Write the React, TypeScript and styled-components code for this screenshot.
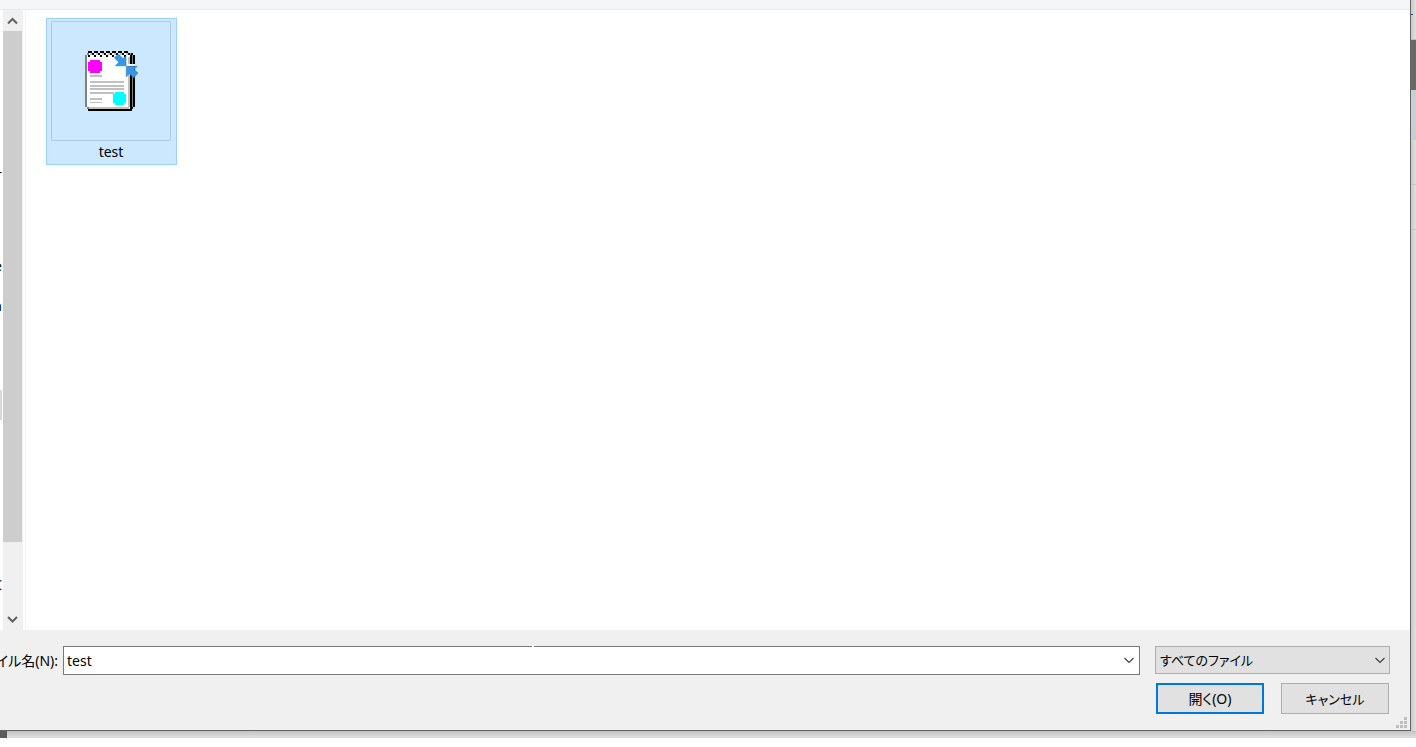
import React from "react";
import styled, { createGlobalStyle } from "styled-components";

const GlobalStyle = createGlobalStyle`
  * { box-sizing: border-box; }
  body {
    margin: 0;
    background: #fff;
    color: #000;
    font: 14px/20px "Noto Sans", "Noto Sans CJK JP", sans-serif;
    font-feature-settings: "palt";
  }
  button, input, select { font: inherit; color: inherit; font-feature-settings: inherit; }
`;

const Screen = styled.div`
  display: flex;
  flex-direction: column;
  min-height: 100vh;
  padding-bottom: 9px;
`;

const Desktop = styled.div`
  flex: 1;
  display: grid;
  grid-template-columns: minmax(0, 1fr) 5px;
  grid-template-rows: 1fr 7px;
  background: #dcdcdc;
`;

const Dialog = styled.main`
  display: flex;
  flex-direction: column;
  border: solid #636363;
  border-width: 0 1px 1px 0;
  background: #fff;
`;

const BehindRight = styled.div`
  display: flex;
  flex-direction: column;
  background: linear-gradient(to right, #cacaca, #e0e0e0);
`;

const Band = styled.div<{ $height: number; $color?: string; $line?: string }>`
  height: ${(p) => p.$height}px;
  background: ${(p) => p.$color ?? "transparent"};
  border-bottom: ${(p) => (p.$line ? `1px solid ${p.$line}` : "0")};
`;

const Tick = styled.div`
  width: 2px;
  height: 1px;
  margin-top: 14px;
  background: #1f4e8c;
`;

const BehindBottom = styled.div`
  grid-column: 1 / -1;
  border-left: 7px solid #5c5c5c;
  background: linear-gradient(to bottom, #c2c2c2, #e0e0e0);
`;

const CommandBar = styled.div`
  height: 10px;
  background: #f5f6f7;
  border-bottom: 1px solid #e8e9eb;
`;

const Content = styled.div`
  flex: 1;
  display: flex;
`;

const NavPane = styled.ul`
  width: 3px;
  margin: 0;
  padding: 147px 1px 0 0;
  list-style: none;
  overflow: hidden;
`;

const NavItem = styled.li<{ $gap?: number; $selected?: boolean }>`
  display: flex;
  justify-content: flex-end;
  height: 30px;
  margin-top: ${(p) => p.$gap ?? 0}px;
  line-height: 30px;
  background: ${(p) => (p.$selected ? "#d9d9d9" : "transparent")};
`;

const ScrollBar = styled.div`
  display: flex;
  flex-direction: column;
  width: 20px;
  padding-right: 1px;
  background: #f0f0f0;
`;

const ScrollButton = styled.button`
  display: flex;
  align-items: center;
  justify-content: center;
  height: 21px;
  padding: 0;
  border: 0;
  background: transparent;
`;

const Track = styled.div`
  flex: 1;
`;

const Thumb = styled.div`
  height: 88.4%;
  background: #cdcdcd;
`;

const FileArea = styled.section`
  flex: 1;
  margin-left: 2px;
  padding: 8px 20px;
  border-left: 1px solid #f3f3f3;
`;

const FileTile = styled.button`
  display: flex;
  flex-direction: column;
  align-items: center;
  width: 131px;
  height: 147px;
  padding: 2px 5px 0 4px;
  border: 1px solid #99d1ff;
  background: #cce8ff;
  line-height: 22px;
`;

const Thumbnail = styled.span`
  display: flex;
  align-items: center;
  justify-content: center;
  width: 120px;
  height: 120px;
  border: 1px solid #afc9de;
  border-radius: 2px;
`;

const Footer = styled.form`
  display: grid;
  grid-template-columns: 63px minmax(0, 1fr) 235px;
  grid-template-rows: 29px 31px;
  row-gap: 8px;
  padding: 16px 20px 16px 0;
  position: relative;
  background: #f0f0f0;
`;

const NameLabel = styled.label`
  display: flex;
  align-items: center;
  justify-content: flex-end;
  padding-right: 5px;
  overflow: hidden;
  white-space: nowrap;
`;

const NameBox = styled.div`
  position: relative;
  display: flex;
  margin-right: 15px;
  border: 1px solid #7a7a7a;
  background: #fff;

  &::before {
    content: "";
    position: absolute;
    top: -1px;
    left: 468px;
    width: 2px;
    height: 1px;
    background: #fff;
  }
`;

const NameInput = styled.input`
  flex: 1;
  min-width: 0;
  padding: 0 3px;
  border: 0;
  outline: 0;
  background: transparent;
`;

const DropButton = styled.button`
  display: flex;
  align-items: center;
  justify-content: center;
  width: 20px;
  padding: 0;
  border: 0;
  background: transparent;
`;

const TypeBox = styled.div`
  position: relative;
  height: 28px;
`;

const TypeSelect = styled.select`
  appearance: none;
  width: 100%;
  height: 100%;
  padding: 0 20px 0 4px;
  border: 1px solid #adadad;
  border-radius: 0;
  background: #e1e1e1;
  font-size: 13px;
`;

const TypeArrow = styled.span`
  position: absolute;
  top: 0;
  right: 5px;
  height: 100%;
  display: flex;
  align-items: center;
  pointer-events: none;
`;

const Actions = styled.div`
  grid-column: 1 / -1;
  display: flex;
  justify-content: flex-end;
  gap: 17px;
  padding-right: 1px;
`;

const ActionButton = styled.button<{ $primary?: boolean }>`
  width: 108px;
  padding: 0;
  border: ${(p) => (p.$primary ? "2px solid #0078d7" : "1px solid #adadad")};
  background: #e1e1e1;
  font-size: ${(p) => (p.$primary ? 14 : 13)}px;
`;

const Grip = styled.svg`
  position: absolute;
  right: 3px;
  bottom: 2px;
`;

const ScrollArrow = ({ down }: { down?: boolean }) => (
  <svg width="11" height="8" viewBox="0 0 11 8" aria-hidden="true">
    <path d={down ? "M1 1l4.500 4.500L10 1" : "M1 6.500L5.500 2 10 6.500"} fill="none" stroke="#606060" strokeWidth="2" />
  </svg>
);

const Chevron = () => (
  <svg width="10" height="7" viewBox="0 0 10 7" aria-hidden="true">
    <path d="M.5 1L5 5.500 9.500 1" fill="none" stroke="#3c3c3c" strokeWidth="1.1" />
  </svg>
);

const coils = [0, 1, 2, 3, 4, 5, 6];

const NotepadIcon = () => (
  <svg width="56" height="60" viewBox="-2 0 56 60" shapeRendering="crispEdges" aria-hidden="true">
    <path d="M2 4h44v54H2z" fill="#fff" />
    <path d="M0 4h2v52H0zM2 2h2v2H2zM2 56h2v2H2z" fill="#808080" />
    <path d="M4 56h40v2H4zM43 6h2v50h-2z" fill="#c0c0c0" />
    <path d="M45 4h2v52h-2zM48 4h2v52h-2zM46 2h2v2h-2zM3 58h44v2H3zM45 56h3v2h-3z" fill="#000" />
    <path d="M47 4h1v52h-1zM44 2h2v2h-2z" fill="#808080" />
    <path d="M4 2h41v2H4z" fill="#fff" />
    {coils.map((i) => (
      <g key={i}>
        <path d={`M${3 + i * 6} 0h4v2h-4zM${7 + i * 6} 2h2v2h-2z`} fill="#000" />
        <path d={`M${5 + i * 6} 2h2v2h-2z`} fill="#c0c0c0" />
        <path d={`M${3 + i * 6} 4h2v2h-2z`} fill="#000" />
      </g>
    ))}
    <path d="M5 9h10v2h2v9h-2v2H5v-2H3v-9h2z" fill="#f0f" />
    <path d="M5 24h12v2H5zM5 30h34v2H5zM5 34h34v2H5zM5 37h34v2H5zM5 41h24v2H5zM5 47h12v2H5zM5 51h12v1H5z" fill="#c0c0c0" />
    <path d="M30 41h9v2h2v9h-2v2h-9v-2h-2v-9h2z" fill="#0ff" />
    <path d="M40 13h10v2H40z" fill="#fff" />
    <g shapeRendering="auto" fill="#3796e6" stroke="#2478c4" strokeWidth=".6">
      <path d="M29.300 6.700L33.500 3.200 38 7.500 41 5v9.800H30.500l3.300-3.500z" />
      <path d="M41.300 15.300h11L49 18.500l4 3.500-4.500 4.800-4.300-4.300-2.900 3.300z" />
    </g>
  </svg>
);

export default function App() {
  return (
    <Screen>
      <GlobalStyle />
      <Desktop>
        <Dialog>
          <CommandBar />
          <Content>
            <NavPane>
              <NavItem>-</NavItem>
              <NavItem $gap={64}>e</NavItem>
              <NavItem $gap={10}>n</NavItem>
              <NavItem $gap={69} $selected />
              <NavItem $gap={150}>C</NavItem>
            </NavPane>
            <ScrollBar>
              <ScrollButton type="button" aria-label="上へスクロール">
                <ScrollArrow />
              </ScrollButton>
              <Track>
                <Thumb />
              </Track>
              <ScrollButton type="button" aria-label="下へスクロール">
                <ScrollArrow down />
              </ScrollButton>
            </ScrollBar>
            <FileArea>
              <FileTile type="button">
                <Thumbnail>
                  <NotepadIcon />
                </Thumbnail>
                <span>test</span>
              </FileTile>
            </FileArea>
          </Content>
          <Footer onSubmit={(e) => e.preventDefault()}>
            <NameLabel htmlFor="file-name">ファイル名(N):</NameLabel>
            <NameBox>
              <NameInput id="file-name" type="text" defaultValue="test" />
              <DropButton type="button" aria-label="履歴を表示">
                <Chevron />
              </DropButton>
            </NameBox>
            <TypeBox>
              <TypeSelect aria-label="ファイルの種類">
                <option>すべてのファイル</option>
              </TypeSelect>
              <TypeArrow>
                <Chevron />
              </TypeArrow>
            </TypeBox>
            <Actions>
              <ActionButton type="submit" $primary>
                開く(O)
              </ActionButton>
              <ActionButton type="button">キャンセル</ActionButton>
            </Actions>
            <Grip width="11" height="11" viewBox="0 0 11 11" aria-hidden="true">
              <path d="M8 0h3v3H8zM4 4h3v3H4zM8 4h3v3H8zM0 8h3v3H0zM4 8h3v3H4zM8 8h3v3H8z" fill="#bfbfbf" />
            </Grip>
          </Footer>
        </Dialog>
        <BehindRight>
          <Band $height={40} $line="#bcbcbc">
            <Tick />
          </Band>
          <Band $height={50} $color="#686868" />
          <Band $height={50} $color="#c9ced4" />
          <Band $height={45} $line="#c6c6c6" />
          <Band $height={45} $line="#c6c6c6" />
        </BehindRight>
        <BehindBottom />
      </Desktop>
    </Screen>
  );
}
